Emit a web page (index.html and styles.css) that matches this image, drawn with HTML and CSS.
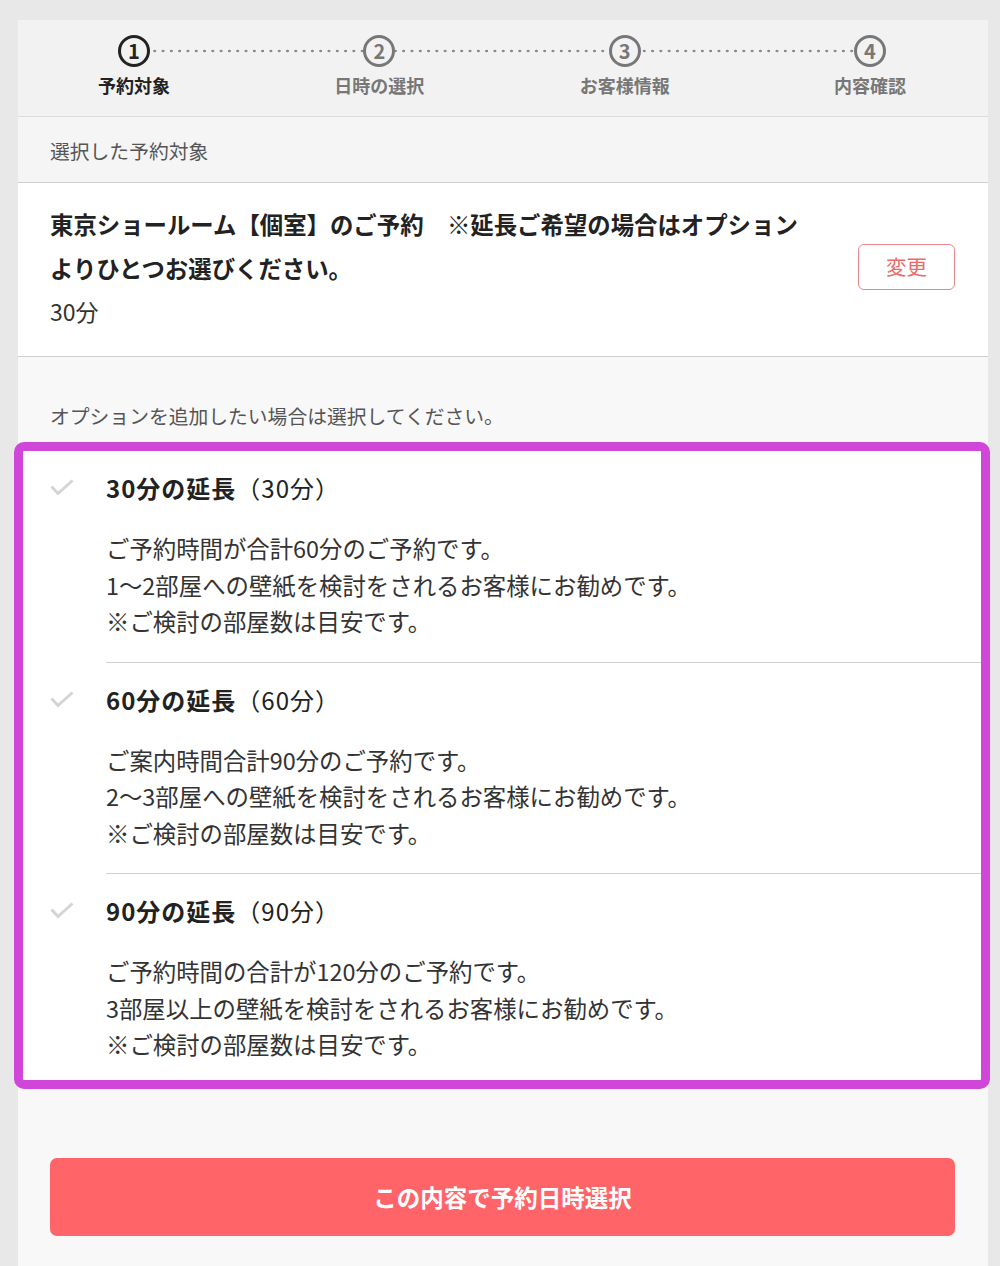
FILE: index.html
```html
<!DOCTYPE html>
<html lang="ja">
<head>
<meta charset="utf-8">
<title>予約</title>
<link rel="stylesheet" href="styles.css">
</head>
<body>
<div class="page">
  <div class="stepper">
    <div class="step-line"></div>
    <div class="step active"><div class="circle">1</div><div class="label">予約対象</div></div>
    <div class="step"><div class="circle">2</div><div class="label">日時の選択</div></div>
    <div class="step"><div class="circle">3</div><div class="label">お客様情報</div></div>
    <div class="step"><div class="circle">4</div><div class="label">内容確認</div></div>
  </div>

  <div class="section-head">選択した予約対象</div>

  <div class="selected">
    <div class="selected-text">
      <div class="selected-title">東京ショールーム【個室】のご予約　※延長ご希望の場合はオプションよりひとつお選びください。</div>
      <div class="selected-time">30分</div>
    </div>
    <button class="change-btn" type="button">変更</button>
  </div>

  <div class="options-area">
    <p class="options-note">オプションを追加したい場合は選択してください。</p>
    <div class="highlight">
      <ul class="option-list">
        <li class="option">
          <span class="check"><svg width="24" height="18" viewBox="0 0 24 18"><polyline points="1.5,7.5 8,14.5 22.5,1.5" fill="none" stroke="#d4d4d4" stroke-width="3"/></svg></span>
          <div class="option-body">
            <div class="option-title"><strong>30分の延長</strong>（30分）</div>
            <p class="option-desc">ご予約時間が合計60分のご予約です。<br>1〜2部屋への壁紙を検討をされるお客様にお勧めです。<br>※ご検討の部屋数は目安です。</p>
          </div>
        </li>
        <li class="option">
          <span class="check"><svg width="24" height="18" viewBox="0 0 24 18"><polyline points="1.5,7.5 8,14.5 22.5,1.5" fill="none" stroke="#d4d4d4" stroke-width="3"/></svg></span>
          <div class="option-body">
            <div class="option-title"><strong>60分の延長</strong>（60分）</div>
            <p class="option-desc">ご案内時間合計90分のご予約です。<br>2〜3部屋への壁紙を検討をされるお客様にお勧めです。<br>※ご検討の部屋数は目安です。</p>
          </div>
        </li>
        <li class="option">
          <span class="check"><svg width="24" height="18" viewBox="0 0 24 18"><polyline points="1.5,7.5 8,14.5 22.5,1.5" fill="none" stroke="#d4d4d4" stroke-width="3"/></svg></span>
          <div class="option-body">
            <div class="option-title"><strong>90分の延長</strong>（90分）</div>
            <p class="option-desc">ご予約時間の合計が120分のご予約です。<br>3部屋以上の壁紙を検討をされるお客様にお勧めです。<br>※ご検討の部屋数は目安です。</p>
          </div>
        </li>
      </ul>
    </div>
    <div class="submit-wrap">
      <button class="submit-btn" type="button">この内容で予約日時選択</button>
    </div>
  </div>
</div>
</body>
</html>
```

FILE: styles.css
```css
* { box-sizing: border-box; }

html, body {
  margin: 0;
  padding: 0;
}

body {
  background: #e8e8e8;
  font-family: Meiryo, "Noto Sans CJK JP", "Noto Sans", sans-serif;
  color: #333;
  padding: 20px 12px 0 18px;
}

.page {
  width: 970px;
  background: #f8f8f8;
  min-height: 1300px;
}

/* stepper */
.stepper {
  position: relative;
  display: flex;
  justify-content: space-between;
  padding: 15px 68px 19px 66px;
  background: #f2f2f2;
  border-bottom: 1px solid #dcdcdc;
}

.step-line {
  position: absolute;
  left: 116px;
  right: 118px;
  top: 29px;
  height: 4px;
  background-image: radial-gradient(circle, #8a8a8a 1.2px, transparent 1.6px);
  background-size: 8.3px 4px;
  background-repeat: repeat-x;
}

.step {
  position: relative;
  width: 100px;
  display: flex;
  flex-direction: column;
  align-items: center;
  gap: 6px;
  color: #777;
}

.circle {
  width: 32px;
  height: 32px;
  border: 3px solid #777;
  border-radius: 50%;
  background: #f2f2f2;
  display: flex;
  align-items: center;
  justify-content: center;
  font-size: 20px;
  font-weight: 700;
  line-height: 1;
  padding-bottom: 1px;
}

.label {
  font-size: 18px;
  font-weight: 700;
  line-height: 24px;
  white-space: nowrap;
}

.step.active { color: #222; }
.step.active .circle { border-color: #222; }

/* selected header */
.section-head {
  height: 66px;
  display: flex;
  align-items: center;
  padding: 2px 32px 0;
  background: #f5f5f5;
  border-bottom: 1px solid #cfcfcf;
  font-size: 19.8px;
  color: #555;
}

.selected {
  display: flex;
  align-items: center;
  gap: 50px;
  padding: 19px 33px 24px 32px;
  background: #fff;
  border-bottom: 1px solid #cfcfcf;
}

.selected-text { flex: 1; }

.selected-title {
  font-size: 23.4px;
  font-weight: 700;
  line-height: 44px;
  color: #222;
}

.selected-time {
  font-size: 23px;
  line-height: 42px;
  color: #333;
}

.change-btn {
  width: 97px;
  height: 46px;
  flex: none;
  background: #fff;
  border: 1.5px solid #ea8787;
  border-radius: 6px;
  color: #ea6a6a;
  font-family: inherit;
  font-size: 20.5px;
  padding: 0 0 2px;
}

/* options */
.options-area {
  background: #f8f8f8;
  padding-top: 45px;
}

.options-note {
  margin: 0 32px;
  font-size: 19.8px;
  line-height: 28px;
  color: #555;
}

.highlight {
  margin: 12px -2px 0 -4px;
  border: 9px solid #d046d8;
  border-radius: 10px;
  background: #fff;
}

.option-list {
  list-style: none;
  margin: 0;
  padding: 0;
}

.option {
  display: flex;
}

.check {
  width: 83px;
  flex: none;
  padding: 28px 0 0 27px;
}

.check svg { display: block; }

.option-body {
  flex: 1;
  padding: 19px 0 22px 0;
  border-bottom: 1px solid #d0d0d0;
}

.option:last-child .option-body {
  border-bottom: none;
  padding-bottom: 17px;
}

.option-title {
  font-size: 24px;
  line-height: 36px;
  letter-spacing: 1px;
  color: #222;
}

.option-title strong { font-weight: 700; }

.option-desc {
  margin: 24px 0 0;
  font-size: 23.4px;
  line-height: 36.5px;
  color: #333;
}

.submit-wrap {
  padding: 69px 33px 40px 32px;
}

.submit-btn {
  display: block;
  width: 100%;
  height: 78px;
  border: none;
  border-radius: 7px;
  background: #ff6468;
  color: #fff;
  font-family: inherit;
  font-size: 23.5px;
  font-weight: 700;
  padding: 0;
}
```
